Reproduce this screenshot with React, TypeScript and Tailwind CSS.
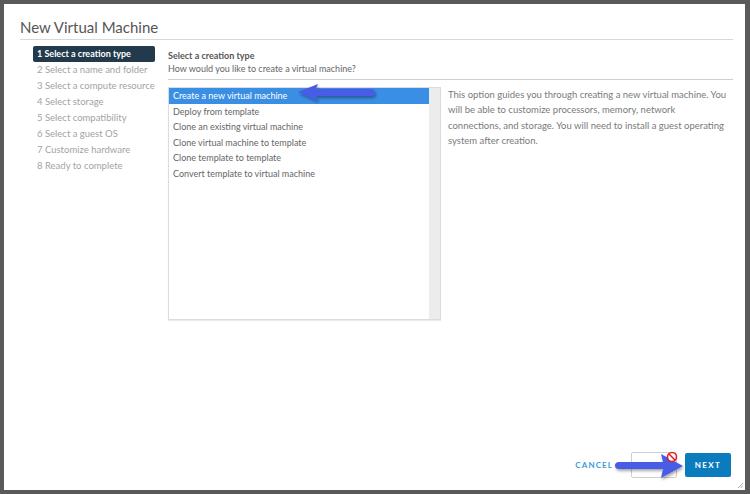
import React from "react";

const steps = [
  "1 Select a creation type",
  "2 Select a name and folder",
  "3 Select a compute resource",
  "4 Select storage",
  "5 Select compatibility",
  "6 Select a guest OS",
  "7 Customize hardware",
  "8 Ready to complete",
];

const options = [
  "Create a new virtual machine",
  "Deploy from template",
  "Clone an existing virtual machine",
  "Clone virtual machine to template",
  "Clone template to template",
  "Convert template to virtual machine",
];

const font = "font-['Lato','Open_Sans',sans-serif]";

const App = () => {
  return (
    <div className={`w-[750px] h-[494px] bg-[#5a5a5a] pt-[4px] pl-[4px] ${font}`}>
      <div className="w-[741px] h-[486px] bg-white relative flex flex-col">
        {/* header */}
        <div className="ml-[16px] mr-[12px] pt-[14px] pb-[3px] border-b border-[#d8d8d8]">
          <h1 className="text-[15px] leading-[18px] text-[#565656] font-normal">New Virtual Machine</h1>
        </div>

        <div className="flex flex-1 pt-[6px]">
          {/* steps */}
          <nav className="ml-[29px] w-[122px] flex flex-col">
            {steps.map((s, i) => (
              <div
                key={s}
                className={`h-[16px] leading-[16px] px-[4px] whitespace-nowrap rounded-[2px] ${
                  i === 0 ? "bg-[#223a4c] text-white font-bold text-[9px]" : "text-[#a3a3a3] text-[9.5px]"
                }`}
              >
                {s}
              </div>
            ))}
          </nav>

          {/* content */}
          <div className="ml-[13px] mr-[12px] flex-1 flex flex-col">
            <div className="pt-[3px] pb-[4px] border-b border-[#cfcfcf]">
              <p className="text-[9px] leading-[13px] font-bold text-[#565656]">Select a creation type</p>
              <p className="text-[9px] leading-[13px] text-[#666]">How would you like to create a virtual machine?</p>
            </div>

            <div className="flex mt-[7px]">
              <div className="w-[273px] h-[233px] border border-[#dcdcdc] flex shadow-[0_1px_1px_rgba(0,0,0,0.08)]">
                <div className="flex-1 flex flex-col">
                  {options.map((o, i) => (
                    <div
                      key={o}
                      className={`h-[15.5px] leading-[15.5px] px-[4px] text-[9px] whitespace-nowrap ${
                        i === 0 ? "bg-[#3a8ee3] text-white" : "text-[#666]"
                      }`}
                    >
                      {o}
                    </div>
                  ))}
                </div>
                <div className="w-[11px] bg-[#ececec]" />
              </div>
              <p className="ml-[7px] mt-[0px] w-[282px] text-[9.5px] leading-[15.3px] text-[#7a7a7a]">
                This option guides you through creating a new virtual machine. You will be able to customize
                processors, memory, network connections, and storage. You will need to install a guest operating
                system after creation.
              </p>
            </div>
          </div>
        </div>

        {/* footer */}
        <div className="flex items-center justify-end gap-[8px] mr-[14px] mb-[12px]">
          <button className="text-[8px] font-bold tracking-[1.1px] text-[#3a9ad9] mr-[10px]">CANCEL</button>
          <div className="w-[46px] h-[26px] border border-[#cfcfcf] rounded-[2px] bg-white" />
          <button className="w-[46px] h-[24px] bg-[#0a7bbd] rounded-[2px] text-white text-[8px] font-bold tracking-[1.4px]">
            NEXT
          </button>
        </div>

        {/* annotation arrows */}
        <svg className="absolute left-[292px] top-[78px]" width="82" height="24" viewBox="0 0 82 24">
          <defs>
            <filter id="sh1" x="-20%" y="-40%" width="140%" height="180%">
              <feDropShadow dx="1" dy="2" stdDeviation="1.5" floodColor="#000" floodOpacity="0.35" />
            </filter>
          </defs>
          <path
            d="M2 10 L22 2 L20 7 L75 7 Q79 7 79 10.5 Q79 14 75 14 L20 14 L22 19 Z"
            fill="#4a5ce6"
            filter="url(#sh1)"
          />
        </svg>
        <svg className="absolute left-[609px] top-[447px]" width="72" height="30" viewBox="0 0 72 30">
          <defs>
            <filter id="sh2" x="-20%" y="-40%" width="140%" height="180%">
              <feDropShadow dx="1" dy="2" stdDeviation="1.5" floodColor="#000" floodOpacity="0.35" />
            </filter>
          </defs>
          <path
            d="M70 15 L48 3 L50 11 L6 11 Q2 11 2 14.5 Q2 18 6 18 L50 18 L48 27 Z"
            fill="#4a5ce6"
            filter="url(#sh2)"
          />
        </svg>
        {/* no-entry badge */}
        <svg className="absolute left-[662px] top-[447px]" width="12" height="12" viewBox="0 0 12 12">
          <circle cx="6" cy="6" r="4.5" fill="white" stroke="#e0202a" strokeWidth="1.6" />
          <line x1="3" y1="3" x2="9" y2="9" stroke="#e0202a" strokeWidth="1.6" />
        </svg>
        {/* resize grip */}
        <svg className="absolute right-[2px] bottom-[2px]" width="6" height="6" viewBox="0 0 6 6">
          <line x1="1" y1="6" x2="6" y2="1" stroke="#999" strokeWidth="0.8" />
          <line x1="3.5" y1="6" x2="6" y2="3.5" stroke="#999" strokeWidth="0.8" />
        </svg>
      </div>
    </div>
  );
};

export default App;
